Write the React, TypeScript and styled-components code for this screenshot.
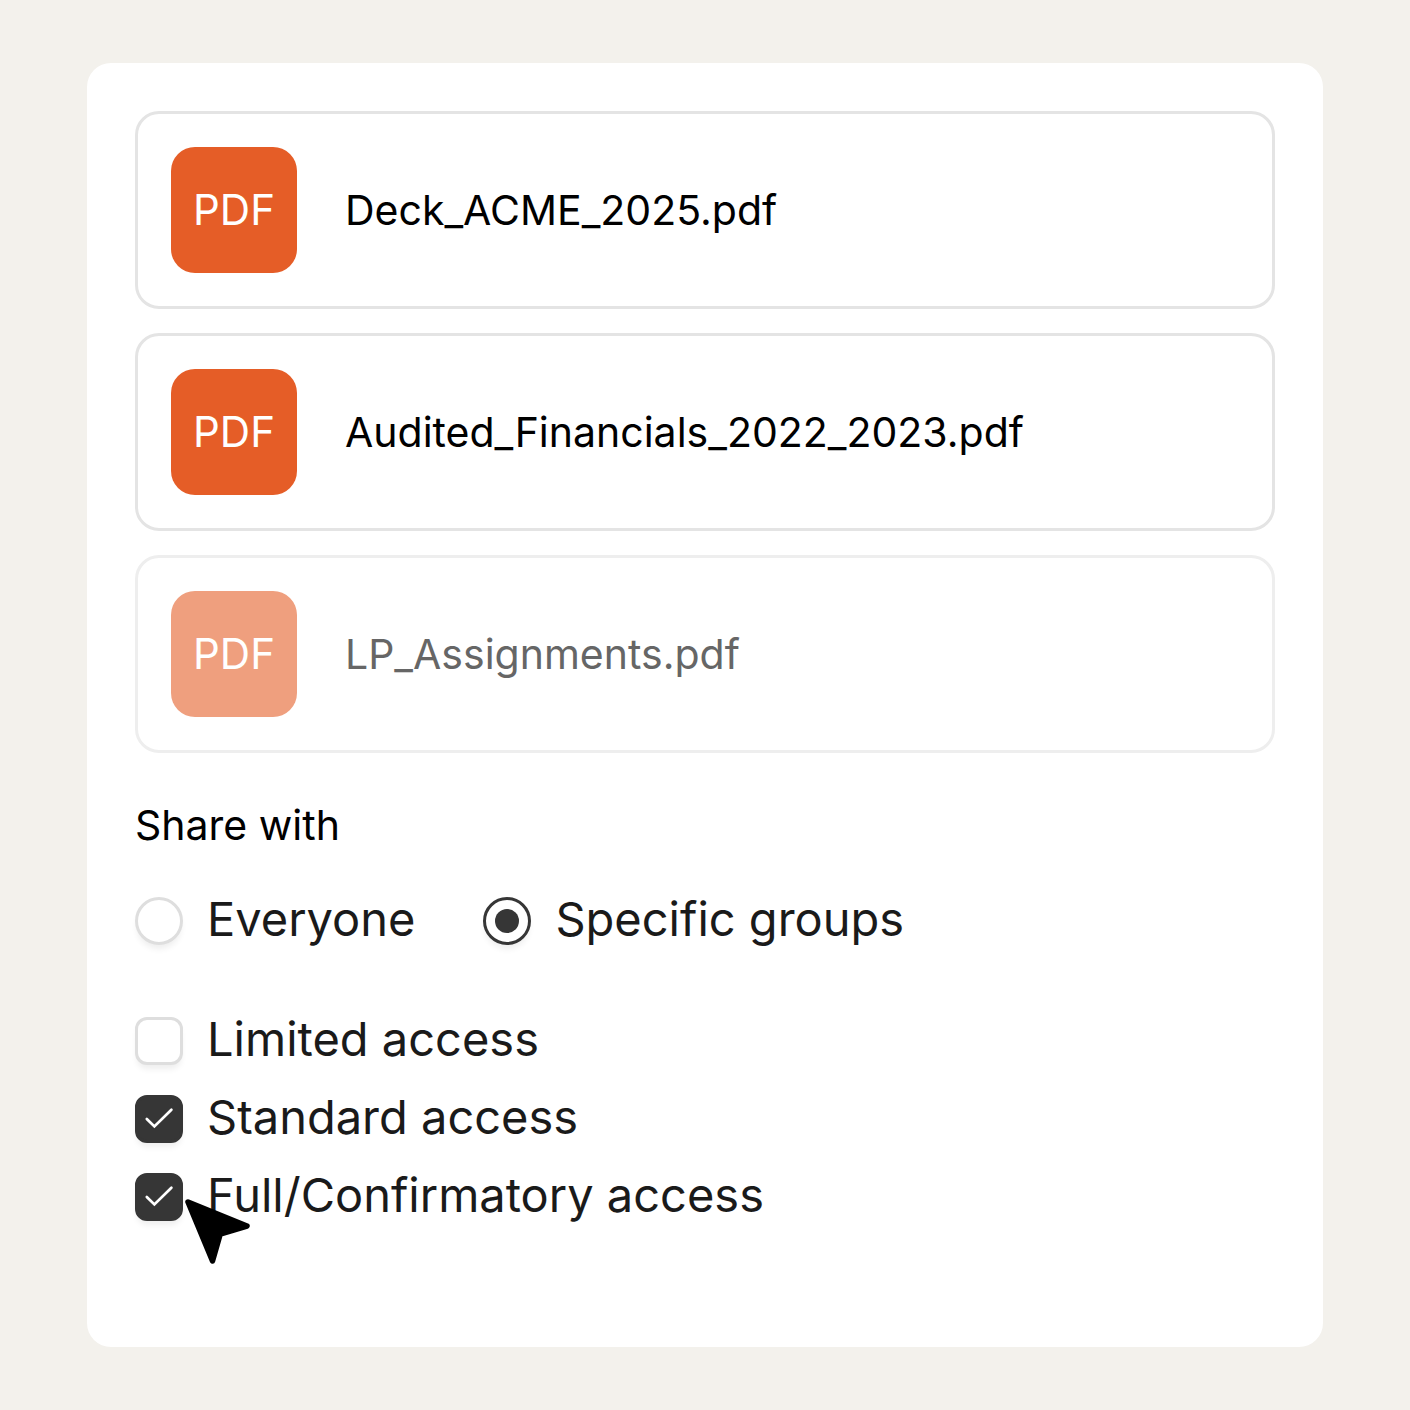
import { useState } from "react";
import styled, { createGlobalStyle } from "styled-components";

const GlobalStyle = createGlobalStyle`
  *, *::before, *::after {
    box-sizing: border-box;
  }
  body {
    margin: 0;
    background: #f3f1ec;
    font-family: Inter, "Liberation Sans", Arial, sans-serif;
    color: #000;
  }
`;

const Page = styled.main`
  padding: 63px 87px;
`;

const Card = styled.form`
  padding: 48px 48px 120px;
  border-radius: 24px;
  background: #fff;
`;

const FileList = styled.ul`
  display: flex;
  flex-direction: column;
  gap: 24px;
  margin: 0;
  padding: 0;
  list-style: none;
`;

const FileRow = styled.li<{ $muted: boolean }>`
  display: flex;
  align-items: center;
  gap: 48px;
  padding: 33px;
  border: 3px solid ${(p) => (p.$muted ? "#eeeeee" : "#e4e4e4")};
  border-radius: 24px;
  color: ${(p) => (p.$muted ? "#666" : "#000")};
`;

const FileBadge = styled.span<{ $muted: boolean }>`
  display: grid;
  place-items: center;
  flex: none;
  width: 126px;
  height: 126px;
  border-radius: 24px;
  background: ${(p) => (p.$muted ? "#ef9f7e" : "#e55d27")};
  color: #fff;
  font-size: 42px;
  line-height: 48px;
`;

const FileName = styled.span`
  font-size: 41px;
  line-height: 48px;
`;

const Group = styled.fieldset`
  margin: 0;
  padding: 0;
  border: 0;
  min-width: 0;
`;

const GroupTitle = styled.legend`
  padding: 48px 0 42px;
  font-size: 41px;
  line-height: 48px;
`;

const RadioRow = styled.div`
  display: flex;
  flex-wrap: wrap;
  gap: 68px;
`;

const CheckList = styled.div`
  display: flex;
  flex-direction: column;
  align-items: flex-start;
  gap: 18px;
  margin-top: 60px;
`;

const Option = styled.label`
  display: flex;
  align-items: center;
  gap: 24px;
  color: #1a1a1a;
  font-size: 47px;
  line-height: 56px;
`;

const OptionText = styled.span`
  padding-bottom: 4px;
`;

const ControlBox = styled.span`
  position: relative;
  display: grid;
  flex: none;
  width: 48px;
  height: 48px;

  > * {
    grid-area: 1 / 1;
  }
`;

const Control = styled.input`
  appearance: none;
  width: 48px;
  height: 48px;
  margin: 0;
  border: 3px solid #dedede;
  background: #fff;
  box-shadow: 0 6px 6px -2px rgba(0, 0, 0, 0.07);
`;

const Radio = styled(Control)`
  display: grid;
  place-items: center;
  flex: none;
  border-radius: 50%;

  &:checked {
    border-color: #363636;
  }
  &:checked::before {
    content: "";
    width: 24px;
    height: 24px;
    border-radius: 50%;
    background: #363636;
  }
`;

const Checkbox = styled(Control)`
  border-radius: 12px;

  &:checked {
    border-color: #363636;
    background: #363636;
  }
`;

const CheckMark = styled.svg`
  z-index: 1;
  width: 48px;
  height: 48px;
  pointer-events: none;
`;

const Pointer = styled.svg`
  position: absolute;
  z-index: 2;
  left: 48px;
  top: 24px;
  width: 70px;
  height: 70px;
  pointer-events: none;
`;

const files = [
  { name: "Deck_ACME_2025.pdf", muted: false },
  { name: "Audited_Financials_2022_2023.pdf", muted: false },
  { name: "LP_Assignments.pdf", muted: true },
];

const audiences = ["Everyone", "Specific groups"];
const levels = ["Limited access", "Standard access", "Full/Confirmatory access"];

export default function App() {
  const [audience, setAudience] = useState("Specific groups");
  const [granted, setGranted] = useState([levels[1], levels[2]]);

  const toggle = (level: string) =>
    setGranted((now) =>
      now.includes(level) ? now.filter((l) => l !== level) : [...now, level]
    );

  return (
    <>
      <GlobalStyle />
      <Page>
        <Card>
          <FileList>
            {files.map((file) => (
              <FileRow key={file.name} $muted={file.muted}>
                <FileBadge $muted={file.muted}>PDF</FileBadge>
                <FileName>{file.name}</FileName>
              </FileRow>
            ))}
          </FileList>
          <Group>
            <GroupTitle>Share with</GroupTitle>
            <RadioRow>
              {audiences.map((name) => (
                <Option key={name}>
                  <Radio
                    type="radio"
                    name="audience"
                    checked={audience === name}
                    onChange={() => setAudience(name)}
                  />
                  <OptionText>{name}</OptionText>
                </Option>
              ))}
            </RadioRow>
            <CheckList>
              {levels.map((level, i) => (
                <Option key={level}>
                  <ControlBox>
                    <Checkbox
                      type="checkbox"
                      checked={granted.includes(level)}
                      onChange={() => toggle(level)}
                    />
                    {granted.includes(level) && (
                      <CheckMark viewBox="0 0 48 48" fill="none" aria-hidden="true">
                        <path
                          d="M11.8 24 19.4 31.4 36.4 14.8"
                          stroke="#fff"
                          strokeWidth="2.7"
                          strokeLinecap="round"
                        />
                      </CheckMark>
                    )}
                    {i === levels.length - 1 && (
                      <Pointer viewBox="0 0 70 70" aria-hidden="true">
                        <path
                          d="M5 5 64 29 37.2 37.2 29.5 64Z"
                          stroke="#000"
                          strokeWidth="5.5"
                          strokeLinejoin="round"
                        />
                      </Pointer>
                    )}
                  </ControlBox>
                  <OptionText>{level}</OptionText>
                </Option>
              ))}
            </CheckList>
          </Group>
        </Card>
      </Page>
    </>
  );
}
